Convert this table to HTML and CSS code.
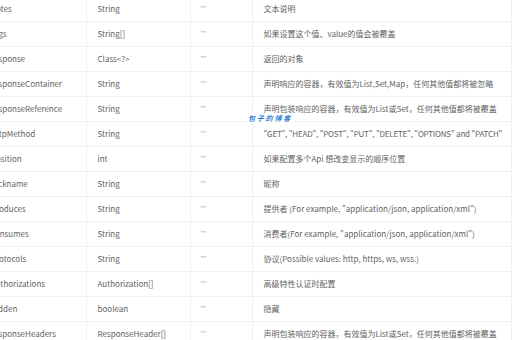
FILE: index.html
```html
<!DOCTYPE html>
<html lang="zh">
<head>
<meta charset="utf-8">
<title>ApiOperation</title>
<link rel="stylesheet" href="styles.css">
</head>
<body>
<div class="viewport">
  <table class="attrs">
    <colgroup>
      <col class="c-name"><col class="c-type"><col class="c-def"><col class="c-desc">
    </colgroup>
    <tbody>
      <tr><td>notes</td><td>String</td><td class="def">""</td><td>文本说明</td></tr>
      <tr><td>tags</td><td>String[]</td><td class="def">""</td><td>如果设置这个值、value的值会被覆盖</td></tr>
      <tr><td>response</td><td>Class&lt;?&gt;</td><td class="def">""</td><td>返回的对象</td></tr>
      <tr><td>responseContainer</td><td>String</td><td class="def">""</td><td>声明响应的容器，有效值为List,Set,Map，任何其他值都将被忽略</td></tr>
      <tr><td>responseReference</td><td>String</td><td class="def">""</td><td>声明包装响应的容器，有效值为List或Set，任何其他值都将被覆盖</td></tr>
      <tr><td>httpMethod</td><td>String</td><td class="def">""</td><td class="tight">"GET", "HEAD", "POST", "PUT", "DELETE", "OPTIONS" and "PATCH"</td></tr>
      <tr><td>position</td><td>int</td><td class="def">""</td><td>如果配置多个Api 想改变显示的顺序位置</td></tr>
      <tr><td>nickname</td><td>String</td><td class="def">""</td><td>昵称</td></tr>
      <tr><td>produces</td><td>String</td><td class="def">""</td><td>提供者 (For example, "application/json, application/xml")</td></tr>
      <tr><td>consumes</td><td>String</td><td class="def">""</td><td>消费者(For example, "application/json, application/xml")</td></tr>
      <tr><td>protocols</td><td>String</td><td class="def">""</td><td>协议(Possible values: http, https, ws, wss.)</td></tr>
      <tr><td>authorizations</td><td>Authorization[]</td><td class="def">""</td><td>高级特性认证时配置</td></tr>
      <tr><td>hidden</td><td>boolean</td><td class="def">""</td><td>隐藏</td></tr>
      <tr><td>responseHeaders</td><td>ResponseHeader[]</td><td class="def">""</td><td>声明包装响应的容器，有效值为List或Set，任何其他值都将被覆盖</td></tr>
    </tbody>
  </table>
  <div class="watermark">包子的博客</div>
</div>
</body>
</html>
```

FILE: styles.css
```css
html, body {
  margin: 0;
  padding: 0;
  background: #ffffff;
}

.viewport {
  position: relative;
  width: 512px;
  height: 340px;
  overflow: hidden;
}

.attrs {
  width: 531px;
  border-collapse: collapse;
  table-layout: fixed;
  margin-left: -20px;
  margin-top: -3px;
  font-family: "Noto Sans CJK SC", "Noto Sans", sans-serif;
  font-size: 8px;
  color: #5f5f5f;
}

.c-name { width: 106px; }
.c-type { width: 104px; }
.c-def { width: 62px; }
.c-desc { width: 259px; }

.attrs td {
  height: 24px;
  padding: 0 0 0 11px;
  border-bottom: 1px solid #eef0f5;
  border-right: 1px solid #eef0f5;
  white-space: nowrap;
  overflow: visible;
  vertical-align: middle;
  line-height: 12px;
}

.attrs td.def {
  padding-left: 10px;
  color: #a8a8a8;
  font-size: 6px;
}

.attrs td.tight {
  letter-spacing: -0.2px;
}

.watermark {
  position: absolute;
  left: 247px;
  top: 114px;
  padding: 0 1px;
  background: #ffffff;
  color: #2f7fd8;
  font-family: "Noto Sans CJK SC", sans-serif;
  font-size: 7px;
  font-weight: 700;
  font-style: italic;
  letter-spacing: 1.8px;
  line-height: 9px;
}
```
